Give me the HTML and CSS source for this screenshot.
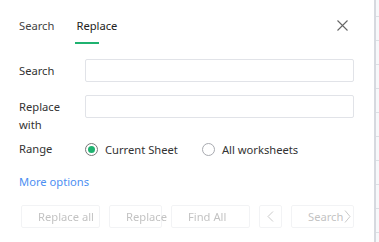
FILE: index.html
```html
<!DOCTYPE html>
<html lang="en">
<head>
<meta charset="UTF-8">
<meta name="viewport" content="width=device-width, initial-scale=1.0">
<title>Find and Replace</title>
<link rel="stylesheet" href="styles.css">
</head>
<body>
<div class="dialog">
    <div class="tabs">
        <span class="tab">Search</span>
        <span class="tab active">Replace</span>
        <button class="close" title="Close">
            <svg width="11" height="11" viewBox="0 0 11 11"><path d="M0.5 0.5 L10.5 10.5 M10.5 0.5 L0.5 10.5" stroke="#666" stroke-width="1.1" fill="none"/></svg>
        </button>
    </div>

    <div class="row">
        <label class="label" for="searchText">Search</label>
        <input class="field" type="text" id="searchText">
    </div>
    <div class="row">
        <label class="label" for="replaceText">Replace with</label>
        <input class="field" type="text" id="replaceText">
    </div>
    <div class="row range">
        <span class="label">Range</span>
        <label class="radio checked"><span class="dot"></span>Current Sheet</label>
        <label class="radio"><span class="dot"></span>All worksheets</label>
    </div>

    <a class="more" href="#">More options</a>

    <div class="actions">
        <button class="btn w-all">Replace all</button>
        <button class="btn w-one">Replace</button>
        <button class="btn w-all">Find All</button>
        <button class="btn w-prev">
            <svg width="7" height="11" viewBox="0 0 7 11"><path d="M6 0.5 L1 5.5 L6 10.5" stroke="#888" stroke-width="1" fill="none"/></svg>
        </button>
        <button class="btn w-next">Search
            <svg class="next" width="7" height="13" viewBox="0 0 7 13"><path d="M1 0.5 L6 6.5 L1 12.5" stroke="#888" stroke-width="1" fill="none"/></svg>
        </button>
    </div>
</div>
<div class="sheet-edge"></div>
</body>
</html>
```

FILE: styles.css
```css
html, body {
    margin: 0;
    height: 242px;
    overflow: hidden;
}
body {
    display: flex;
    font-family: "Noto Sans", "Open Sans", sans-serif;
    font-size: 11.2px;
    color: #333;
    background: #fff;
}
.dialog {
    width: 374px;
    box-sizing: border-box;
    padding: 0 20px 0 19px;
    flex-shrink: 0;
}
.sheet-edge {
    width: 5px;
    flex-shrink: 0;
    border-left: 2px solid #d6d9df;
    background-color: #f7f8fa;
    background-image: repeating-linear-gradient(to bottom, transparent 0, transparent 15px, #dcdfe4 15px, #dcdfe4 16px, transparent 16px, transparent 24px);
    background-position: 0 1px;
}
.tabs {
    display: flex;
    align-items: flex-start;
    height: 44px;
    padding-top: 16px;
    box-sizing: border-box;
}
.tab {
    margin-right: 22px;
    line-height: 20px;
    color: #444;
    position: relative;
    height: 28px;
}
.tab.active {
    color: #222;
}
.tab.active::after {
    content: "";
    position: absolute;
    left: -1px;
    bottom: 0;
    width: 24px;
    height: 2px;
    background: #1fb270;
}
.close {
    margin-left: auto;
    margin-top: 4px;
    margin-right: 6px;
    border: none;
    background: none;
    padding: 0;
    width: 11px;
    height: 11px;
    cursor: pointer;
}
.close svg {
    display: block;
}
.row {
    display: flex;
    align-items: flex-start;
    margin-top: 15px;
}
.row + .row {
    margin-top: 13px;
}
.label {
    width: 66px;
    flex-shrink: 0;
    line-height: 18px;
    padding-top: 3px;
    color: #333;
}
.field {
    width: 269px;
    height: 23px;
    box-sizing: border-box;
    border: 1px solid #e1e3e8;
    border-radius: 2px;
    padding: 0 6px;
    font: inherit;
    outline: none;
}
.row.range {
    margin-top: 6px;
    align-items: center;
}
.row.range .label {
    padding-top: 0;
}
.radio {
    display: flex;
    align-items: center;
    margin-right: 24px;
    color: #333;
}
.dot {
    width: 11px;
    height: 11px;
    border: 1px solid #a8aab0;
    border-radius: 50%;
    margin-right: 7px;
    position: relative;
}
.radio.checked .dot {
    border-color: #777;
}
.radio.checked .dot::after {
    content: "";
    position: absolute;
    left: 2px;
    top: 2px;
    width: 7px;
    height: 7px;
    border-radius: 50%;
    background: #1fb270;
}
.more {
    display: block;
    margin-top: 15px;
    color: #4d8ff2;
    text-decoration: none;
    line-height: 18px;
}
.actions {
    display: flex;
    margin-top: 14px;
    margin-left: 2px;
    opacity: 0.45;
}
.btn {
    height: 23px;
    box-sizing: border-box;
    border: 1px solid #e3e4e8;
    border-radius: 2px;
    background: #fff;
    font: inherit;
    color: #777;
    padding: 0 0 0 16px;
    text-align: left;
    white-space: nowrap;
    margin-right: 9px;
    position: relative;
}
.w-all { width: 79px; }
.w-one { width: 53px; }
.w-prev {
    width: 23px;
    padding: 0;
    text-align: center;
}
.w-prev svg {
    display: block;
    margin: 0 auto;
}
.w-next {
    width: 63px;
    margin-right: 0;
}
.next {
    position: absolute;
    right: 2px;
    top: 4px;
}
```
